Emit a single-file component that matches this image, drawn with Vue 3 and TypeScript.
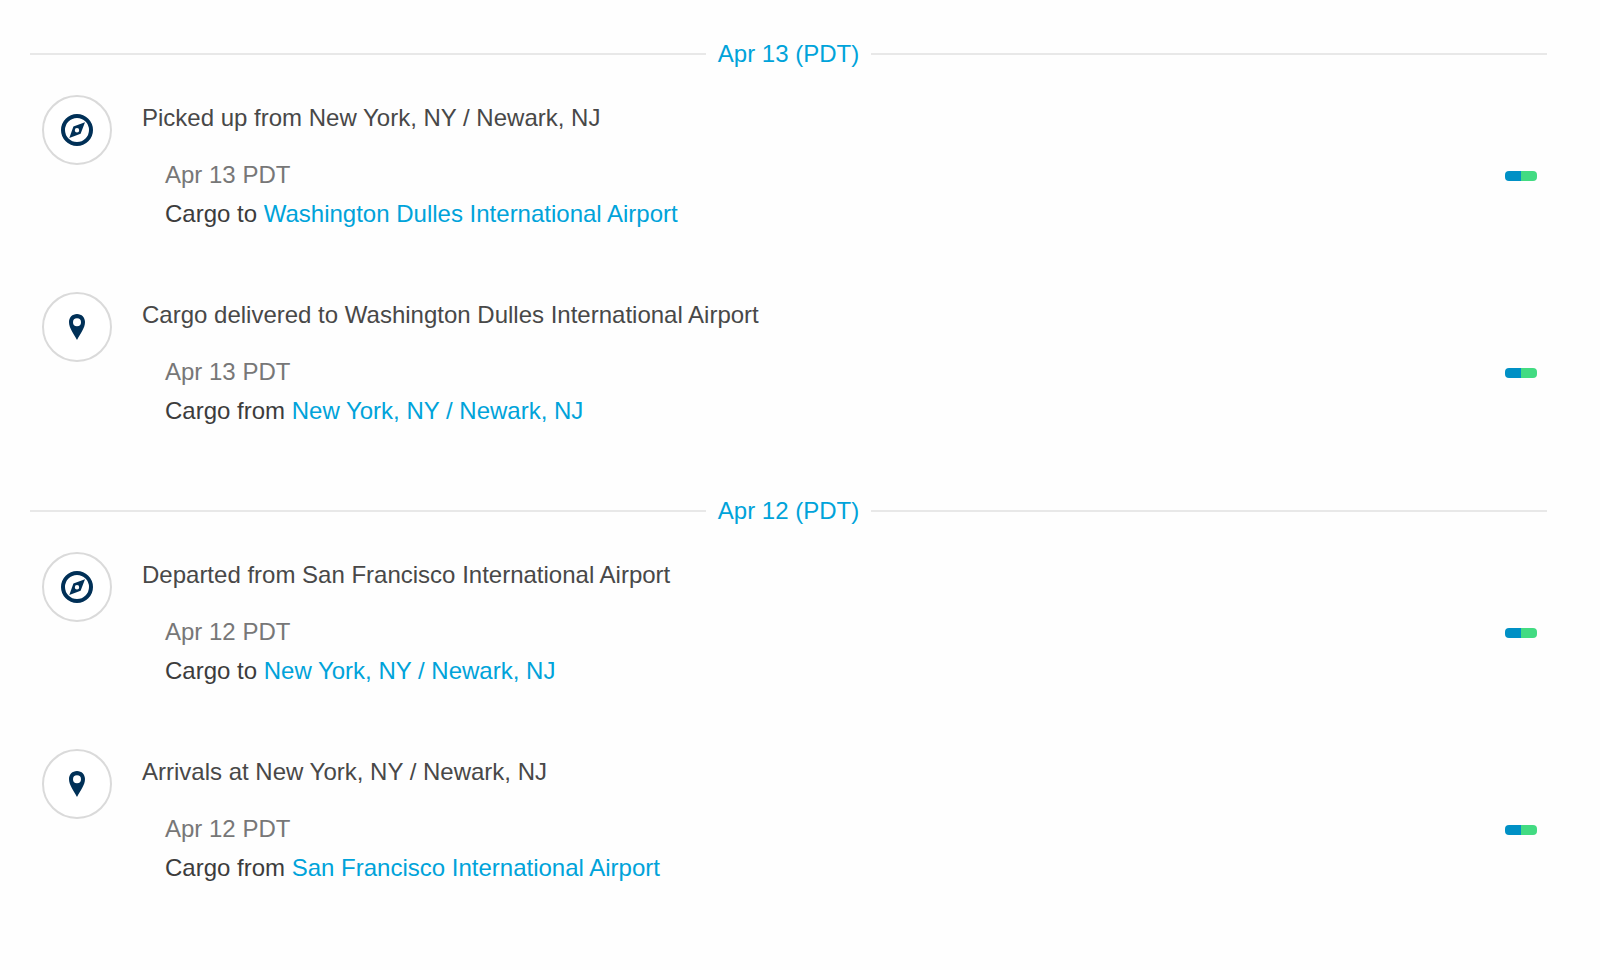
<script setup lang="ts">
interface TimelineEvent {
  icon: 'compass' | 'pin'
  title: string
  date: string
  prefix: string
  place: string
}

interface TimelineDay {
  label: string
  events: TimelineEvent[]
}

const newark = 'New York, NY / Newark, NJ'
const dulles = 'Washington Dulles International Airport'
const sanFrancisco = 'San Francisco International Airport'

const days: TimelineDay[] = [
  {
    label: 'Apr 13 (PDT)',
    events: [
      { icon: 'compass', title: `Picked up from ${newark}`, date: 'Apr 13 PDT', prefix: 'Cargo to', place: dulles },
      { icon: 'pin', title: `Cargo delivered to ${dulles}`, date: 'Apr 13 PDT', prefix: 'Cargo from', place: newark },
    ],
  },
  {
    label: 'Apr 12 (PDT)',
    events: [
      { icon: 'compass', title: `Departed from ${sanFrancisco}`, date: 'Apr 12 PDT', prefix: 'Cargo to', place: newark },
      { icon: 'pin', title: `Arrivals at ${newark}`, date: 'Apr 12 PDT', prefix: 'Cargo from', place: sanFrancisco },
    ],
  },
]
</script>

<template>
  <main class="timeline">
    <section v-for="day in days" :key="day.label" class="day">
      <h2 class="day-label">{{ day.label }}</h2>
      <ul class="events">
        <li v-for="event in day.events" :key="event.title" class="event">
          <div class="badge">
            <svg v-if="event.icon === 'compass'" width="32" height="32" viewBox="0 0 32 32" aria-hidden="true">
              <circle cx="16" cy="16" r="14" fill="none" stroke="#003057" stroke-width="4" />
              <path
                fill="#003057"
                fill-rule="evenodd"
                d="M24 8.300L19.600 19.800L8.300 24L12.400 12.400ZM16 14a2.200 2.200 0 1 0 0 4.400a2.200 2.200 0 1 0 0-4.400Z"
              />
            </svg>
            <svg v-else width="16" height="26" viewBox="0 0 16 26" aria-hidden="true">
              <path
                fill="#003057"
                fill-rule="evenodd"
                d="M8 0C3.2 0 0 3.6 0 8C0 14 4.5 19.5 8 26C11.500 19.5 16 14 16 8C16 3.600 12.800 0 8 0ZM8 4.200a4 4 0 1 1 0 8a4 4 0 1 1 0-8Z"
              />
            </svg>
          </div>
          <div class="content">
            <h3 class="title">{{ event.title }}</h3>
            <div class="details">
              <div class="date-row">
                <span class="date">{{ event.date }}</span>
                <span class="pill" aria-hidden="true"></span>
              </div>
              <p class="cargo">{{ event.prefix }} <a href="#">{{ event.place }}</a></p>
            </div>
          </div>
        </li>
      </ul>
    </section>
  </main>
</template>

<style>
body {
  margin: 0;
  background: #fefefe;
}
</style>

<style scoped>
.timeline {
  display: flex;
  flex-direction: column;
  gap: 61px;
  padding: 34px 53px 0 30px;
  font: 24px/39px "Liberation Sans", Arial, sans-serif;
  color: #3c3c3c;
}

.day {
  display: flex;
  flex-direction: column;
  gap: 22px;
}

.day-label {
  display: flex;
  align-items: center;
  gap: 12px;
  margin: 0;
  font-size: 24px;
  font-weight: 400;
  color: #00a3da;
}

.day-label::before,
.day-label::after {
  content: "";
  flex: 1;
  height: 2px;
  background: #e8e8e8;
}

.events {
  display: flex;
  flex-direction: column;
  gap: 59px;
  margin: 0;
  padding: 0 10px 0 12px;
  list-style: none;
}

.event {
  display: flex;
  gap: 30px;
}

.badge {
  display: flex;
  flex: none;
  align-items: center;
  justify-content: center;
  box-sizing: border-box;
  width: 70px;
  height: 70px;
  border: 2px solid #dadada;
  border-radius: 50%;
  background: #fff;
}

.content {
  flex: 1;
  padding-top: 3px;
}

.title {
  margin: 0;
  font-size: 24px;
  font-weight: 400;
  color: #484848;
}

.details {
  padding: 18px 0 0 23px;
}

.date-row {
  display: flex;
  align-items: center;
  justify-content: space-between;
}

.date {
  color: #777;
}

.pill {
  width: 32px;
  height: 10px;
  margin-top: 2px;
  border-radius: 4px;
  background: linear-gradient(90deg, #0090c5 50%, #42db82 50%);
}

.cargo {
  margin: 0;
}

.cargo a {
  color: #00a3da;
  text-decoration: none;
}
</style>
